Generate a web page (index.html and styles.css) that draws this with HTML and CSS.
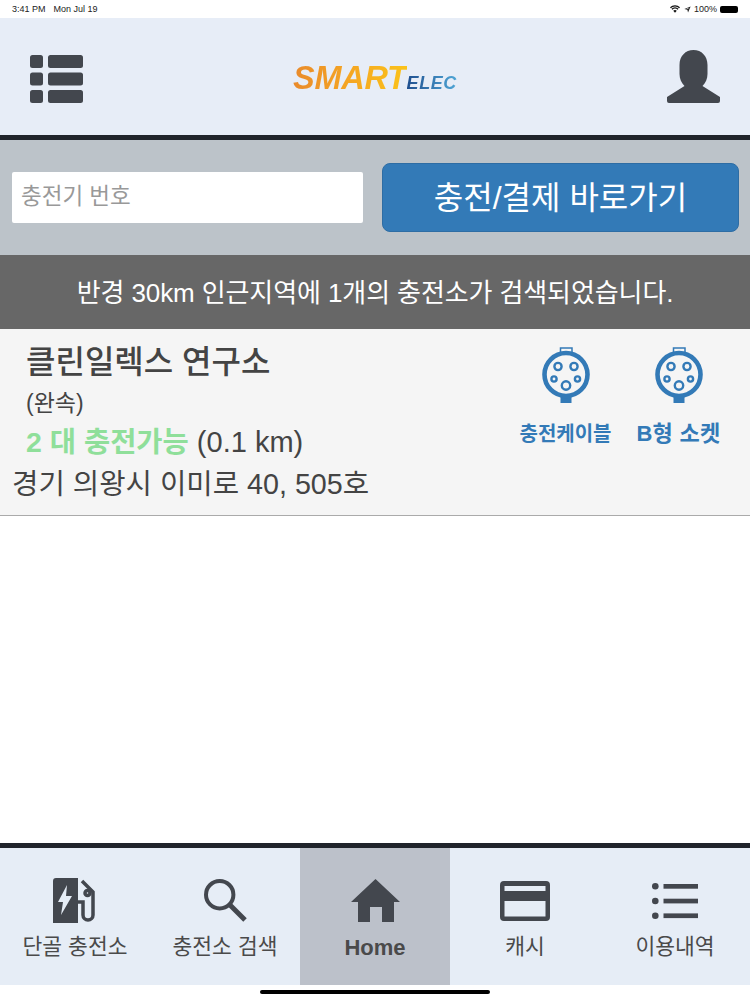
FILE: index.html
```html
<!DOCTYPE html>
<html lang="ko">
  <head>
    <meta charset="UTF-8" />
    <meta name="viewport" content="width=device-width, initial-scale=1.0" />
    <title>Smart Elec</title>
    <link rel="stylesheet" href="styles.css">
  </head>
  <body>
    <div class="statusbar">
      <div class="status-left"><span>3:41 PM</span><span>Mon Jul 19</span></div>
      <div class="status-right">
        <svg class="wifi" viewBox="0 0 12 9"><path d="M6 9 L3.9 6.6 A3 3 0 0 1 8.1 6.6 Z M2.9 5.5 L1.7 4.2 A6 6 0 0 1 10.3 4.2 L9.1 5.5 A4.4 4.4 0 0 0 2.9 5.5 Z M1 3.5 L0 2.4 A8.4 8.4 0 0 1 12 2.4 L11 3.5 A7 7 0 0 0 1 3.5 Z" /></svg>
        <svg class="arrow" viewBox="0 0 9 9"><path d="M8.5 .5 L.5 3.8 L4.3 4.7 L5.2 8.5 Z M6.6 2.4 L4.9 3.9 L3 3.5 Z" fill-rule="evenodd" /></svg>
        <span>100%</span>
        <span class="battery"></span>
      </div>
    </div>

    <header class="topbar">
      <svg class="menu-icon" viewBox="0 0 53 48">
        <rect x="0" y="0" width="13" height="13" rx="2.5" />
        <rect x="18" y="0" width="35" height="13" rx="2.5" />
        <rect x="0" y="17.5" width="13" height="13" rx="2.5" />
        <rect x="18" y="17.5" width="35" height="13" rx="2.5" />
        <rect x="0" y="35" width="13" height="13" rx="2.5" />
        <rect x="18" y="35" width="35" height="13" rx="2.5" />
      </svg>
      <div class="logo"><span class="logo-smart">SMART</span><span class="logo-elec">ELEC</span></div>
      <svg class="user-icon" viewBox="0 0 53 53">
        <path d="M26.5 0 C34.5 0 40.5 6 40.5 15 V24 C40.5 29 38.5 33 35.5 36 L53 47 V51 Q53 53 51 53 H2 Q0 53 0 51 V47 L17.5 36 C14.5 33 12.5 29 12.5 24 V15 C12.5 6 18.5 0 26.5 0 Z" />
      </svg>
    </header>

    <div class="searchbar">
      <input class="charger-input" type="text" placeholder="충전기 번호" />
      <button class="go-button">충전/결제 바로가기</button>
    </div>

    <div class="notice"><span>반경 30km 인근지역에 1개의 충전소가 검색되었습니다.</span></div>

    <div class="station">
      <div class="station-info">
        <h2 class="station-name">클린일렉스 연구소</h2>
        <div class="station-speed">(완속)</div>
        <div class="station-state"><b>2 대 충전가능</b> (0.1 km)</div>
        <div class="station-addr">경기 의왕시 이미로 40, 505호</div>
      </div>
      <div class="connector">
        <svg class="plug" viewBox="0 0 48 56">
          <path class="plug-tab" d="M18.5 7 V1 H30 V7" />
          <rect class="plug-foot" x="18.5" y="48" width="11" height="8" />
          <circle class="plug-ring" cx="24" cy="27.5" r="21.5" />
          <circle class="plug-pin" cx="16" cy="19.5" r="3.6" />
          <circle class="plug-pin" cx="32" cy="19.5" r="3.6" />
          <circle class="plug-pin" cx="12" cy="32" r="2.6" />
          <circle class="plug-pin" cx="35.5" cy="32" r="2.6" />
          <circle class="plug-pin" cx="24" cy="38.5" r="4.2" />
        </svg>
        <span>충전케이블</span>
      </div>
      <div class="connector connector-wide">
        <svg class="plug" viewBox="0 0 48 56">
          <path class="plug-tab" d="M18.5 7 V1 H30 V7" />
          <rect class="plug-foot" x="18.5" y="48" width="11" height="8" />
          <circle class="plug-ring" cx="24" cy="27.5" r="21.5" />
          <circle class="plug-pin" cx="16" cy="19.5" r="3.6" />
          <circle class="plug-pin" cx="32" cy="19.5" r="3.6" />
          <circle class="plug-pin" cx="12" cy="32" r="2.6" />
          <circle class="plug-pin" cx="35.5" cy="32" r="2.6" />
          <circle class="plug-pin" cx="24" cy="38.5" r="4.2" />
        </svg>
        <span>B형 소켓</span>
      </div>
    </div>

    <div class="spacer"></div>

    <nav class="tabbar">
      <div class="tab">
        <div class="tab-icon">
          <svg class="icon-pump" viewBox="0 0 44 45">
            <path d="M3 0 H25 V45 H0 V3 A3 3 0 0 1 3 0 Z M14 7 L5 24 H10 L8 37 L19 18 H13 Z" fill-rule="evenodd" />
            <path class="tab-line" d="M25 24 H30 V37 A5 5 0 0 0 40 37 V14 L29 3" />
            <circle class="tab-line" cx="34.5" cy="15" r="2.5" />
          </svg>
        </div>
        <span>단골 충전소</span>
      </div>
      <div class="tab">
        <div class="tab-icon">
          <svg class="icon-search" viewBox="0 0 43 43">
            <circle class="tab-line search-ring" cx="15.7" cy="15.7" r="13.7" />
            <path class="tab-line search-handle" d="M26 26 L41 41" />
          </svg>
        </div>
        <span>충전소 검색</span>
      </div>
      <div class="tab tab-active">
        <div class="tab-icon">
          <svg class="icon-home" viewBox="0 0 49 43">
            <path d="M24.5 0 L49 23 H43 V43 H31 V28 H19 V43 H7 V23 H0 Z" />
          </svg>
        </div>
        <span>Home</span>
      </div>
      <div class="tab">
        <div class="tab-icon">
          <svg class="icon-card" viewBox="0 0 50 40">
            <path d="M4 0 H46 A4 4 0 0 1 50 4 V36 A4 4 0 0 1 46 40 H4 A4 4 0 0 1 0 36 V4 A4 4 0 0 1 4 0 Z M4.5 5 V10 H45.5 V5 Z M4.5 20 V35.5 H45.5 V20 Z" fill-rule="evenodd" />
          </svg>
        </div>
        <span>캐시</span>
      </div>
      <div class="tab">
        <div class="tab-icon">
          <svg class="icon-list" viewBox="0 0 46 36">
            <circle cx="3.3" cy="3.3" r="3.3" />
            <circle cx="3.3" cy="18" r="3.3" />
            <circle cx="3.3" cy="32.7" r="3.3" />
            <rect x="11.5" y="1" width="34.5" height="4.7" />
            <rect x="11.5" y="15.7" width="34.5" height="4.7" />
            <rect x="11.5" y="30.4" width="34.5" height="4.7" />
          </svg>
        </div>
        <span>이용내역</span>
      </div>
    </nav>

    <div class="home-area"><div class="home-indicator"></div></div>
  </body>
</html>
```

FILE: styles.css
```css
html,
body {
  margin: 0;
  padding: 0;
  height: 1000px;
  overflow: hidden;
  font-family: "Liberation Sans", "Noto Sans CJK KR", sans-serif;
  background-color: #ffffff;
  color: #333;
}
body {
  display: flex;
  flex-direction: column;
}

.statusbar {
  height: 18px;
  padding: 0 12px;
  display: flex;
  align-items: center;
  justify-content: space-between;
  font-size: 9px;
  color: #222;
}
.status-left span {
  margin-right: 8px;
}
.status-right {
  display: flex;
  align-items: center;
  gap: 3px;
}
.wifi {
  width: 10px;
  height: 8px;
  fill: #111;
}
.arrow {
  width: 7px;
  height: 7px;
  margin-left: 1px;
  fill: #222;
}
.battery {
  width: 18px;
  height: 7px;
  border-radius: 2px;
  background-color: #000;
}

.topbar {
  height: 117px;
  background-color: #e7edf7;
  border-bottom: 5px solid #20242b;
  padding: 0 30px;
  display: flex;
  align-items: center;
  justify-content: space-between;
}
.menu-icon {
  width: 53px;
  height: 48px;
  fill: #43474e;
  margin-top: 5px;
}
.user-icon {
  width: 53px;
  height: 53px;
  fill: #43474e;
}
.logo {
  font-style: italic;
  font-weight: bold;
  display: flex;
  align-items: baseline;
  margin-top: 3px;
}
.logo-smart {
  font-size: 32.5px;
  line-height: 36px;
  letter-spacing: -0.3px;
  background: linear-gradient(90deg, #e98a2b, #f5a623 50%, #fbc31a);
  -webkit-background-clip: text;
  background-clip: text;
  color: transparent;
}
.logo-elec {
  font-size: 18px;
  line-height: 24px;
  letter-spacing: 0.6px;
  background: linear-gradient(90deg, #1f4f8f, #4fa6d6);
  -webkit-background-clip: text;
  background-clip: text;
  color: transparent;
}

.searchbar {
  height: 115px;
  background-color: #bcc3c9;
  padding: 0 11px 0 12px;
  display: flex;
  align-items: center;
  justify-content: space-between;
}
.charger-input {
  width: 351px;
  height: 51px;
  box-sizing: border-box;
  border: none;
  border-radius: 2px;
  outline: none;
  padding: 0 0 1px 9px;
  font-family: inherit;
  font-size: 22.5px;
  background-color: #ffffff;
}
.charger-input::placeholder {
  color: #999;
}
.go-button {
  width: 357px;
  height: 69px;
  padding: 0 0 5px;
  border: 1px solid #2e6da4;
  border-radius: 8px;
  background-color: #337ab7;
  color: #ffffff;
  font-family: inherit;
  font-size: 32px;
}

.notice {
  height: 74px;
  padding-bottom: 4px;
  box-sizing: border-box;
  background-color: #676767;
  color: #ffffff;
  font-size: 26px;
  letter-spacing: -0.1px;
  display: flex;
  align-items: center;
  justify-content: center;
}

.station {
  height: 187px;
  box-sizing: border-box;
  background-color: #f5f5f5;
  border-bottom: 1px solid #aaa;
  padding: 0 15px 0 12px;
  display: flex;
  align-items: flex-start;
}
.station-info {
  flex: 1;
  white-space: nowrap;
}
.station-name {
  margin: 15px 0 0 14px;
  font-size: 32px;
  line-height: 36px;
  font-weight: 500;
  color: #444;
}
.station-speed {
  margin: 7px 0 0 14px;
  font-size: 23px;
  line-height: 32px;
  color: #444;
}
.station-state {
  margin: 7px 0 0 14px;
  font-size: 29px;
  line-height: 32px;
  color: #444;
}
.station-state b {
  font-size: 28.5px;
  color: #8fdf9a;
}
.station-addr {
  margin-top: 10px;
  font-size: 28.7px;
  line-height: 32px;
  color: #444;
}
.connector {
  width: 113px;
  margin-top: 18px;
  display: flex;
  flex-direction: column;
  align-items: center;
  font-size: 20px;
  font-weight: bold;
  color: #337ab7;
  white-space: nowrap;
}
.connector-wide {
  font-size: 22px;
  letter-spacing: 0.3px;
}
.connector span {
  margin-top: 17px;
  line-height: 28px;
}
.plug {
  width: 48px;
  height: 56px;
}
.plug-tab {
  fill: none;
  stroke: #337ab7;
  stroke-width: 1.5;
}
.plug-foot {
  fill: #337ab7;
}
.plug-ring {
  fill: #f5f5f5;
  stroke: #337ab7;
  stroke-width: 4.6;
}
.plug-pin {
  fill: none;
  stroke: #337ab7;
  stroke-width: 2.4;
}

.spacer {
  height: 327px;
}

.tabbar {
  height: 137px;
  background-color: #e6edf6;
  border-top: 5px solid #20242b;
  display: flex;
}
.tab {
  width: 150px;
  display: flex;
  flex-direction: column;
  align-items: center;
  font-size: 21.5px;
  color: #4a4a4a;
}
.tab-active {
  background-color: #bcc1ca;
  font-size: 22px;
  font-weight: bold;
}
.tab-icon {
  height: 45px;
  margin-top: 30px;
  display: flex;
  align-items: center;
  fill: #43474e;
}
.tab span {
  margin-top: 10px;
  line-height: 28px;
  white-space: nowrap;
}
.tab-active span {
  margin-top: 11px;
}
.tab-line {
  fill: none;
  stroke: #43474e;
  stroke-width: 3.5;
}
.search-ring {
  stroke-width: 4;
}
.search-handle {
  stroke-width: 5;
}
.icon-pump {
  width: 44px;
  height: 45px;
}
.icon-search {
  width: 43px;
  height: 43px;
}
.icon-home {
  width: 49px;
  height: 43px;
}
.icon-card {
  width: 50px;
  height: 40px;
}
.icon-list {
  width: 46px;
  height: 36px;
}

.home-area {
  flex: 1;
  display: flex;
  justify-content: center;
  padding-top: 5px;
}
.home-indicator {
  width: 230px;
  height: 4px;
  border-radius: 2px;
  background-color: #000;
}
```
